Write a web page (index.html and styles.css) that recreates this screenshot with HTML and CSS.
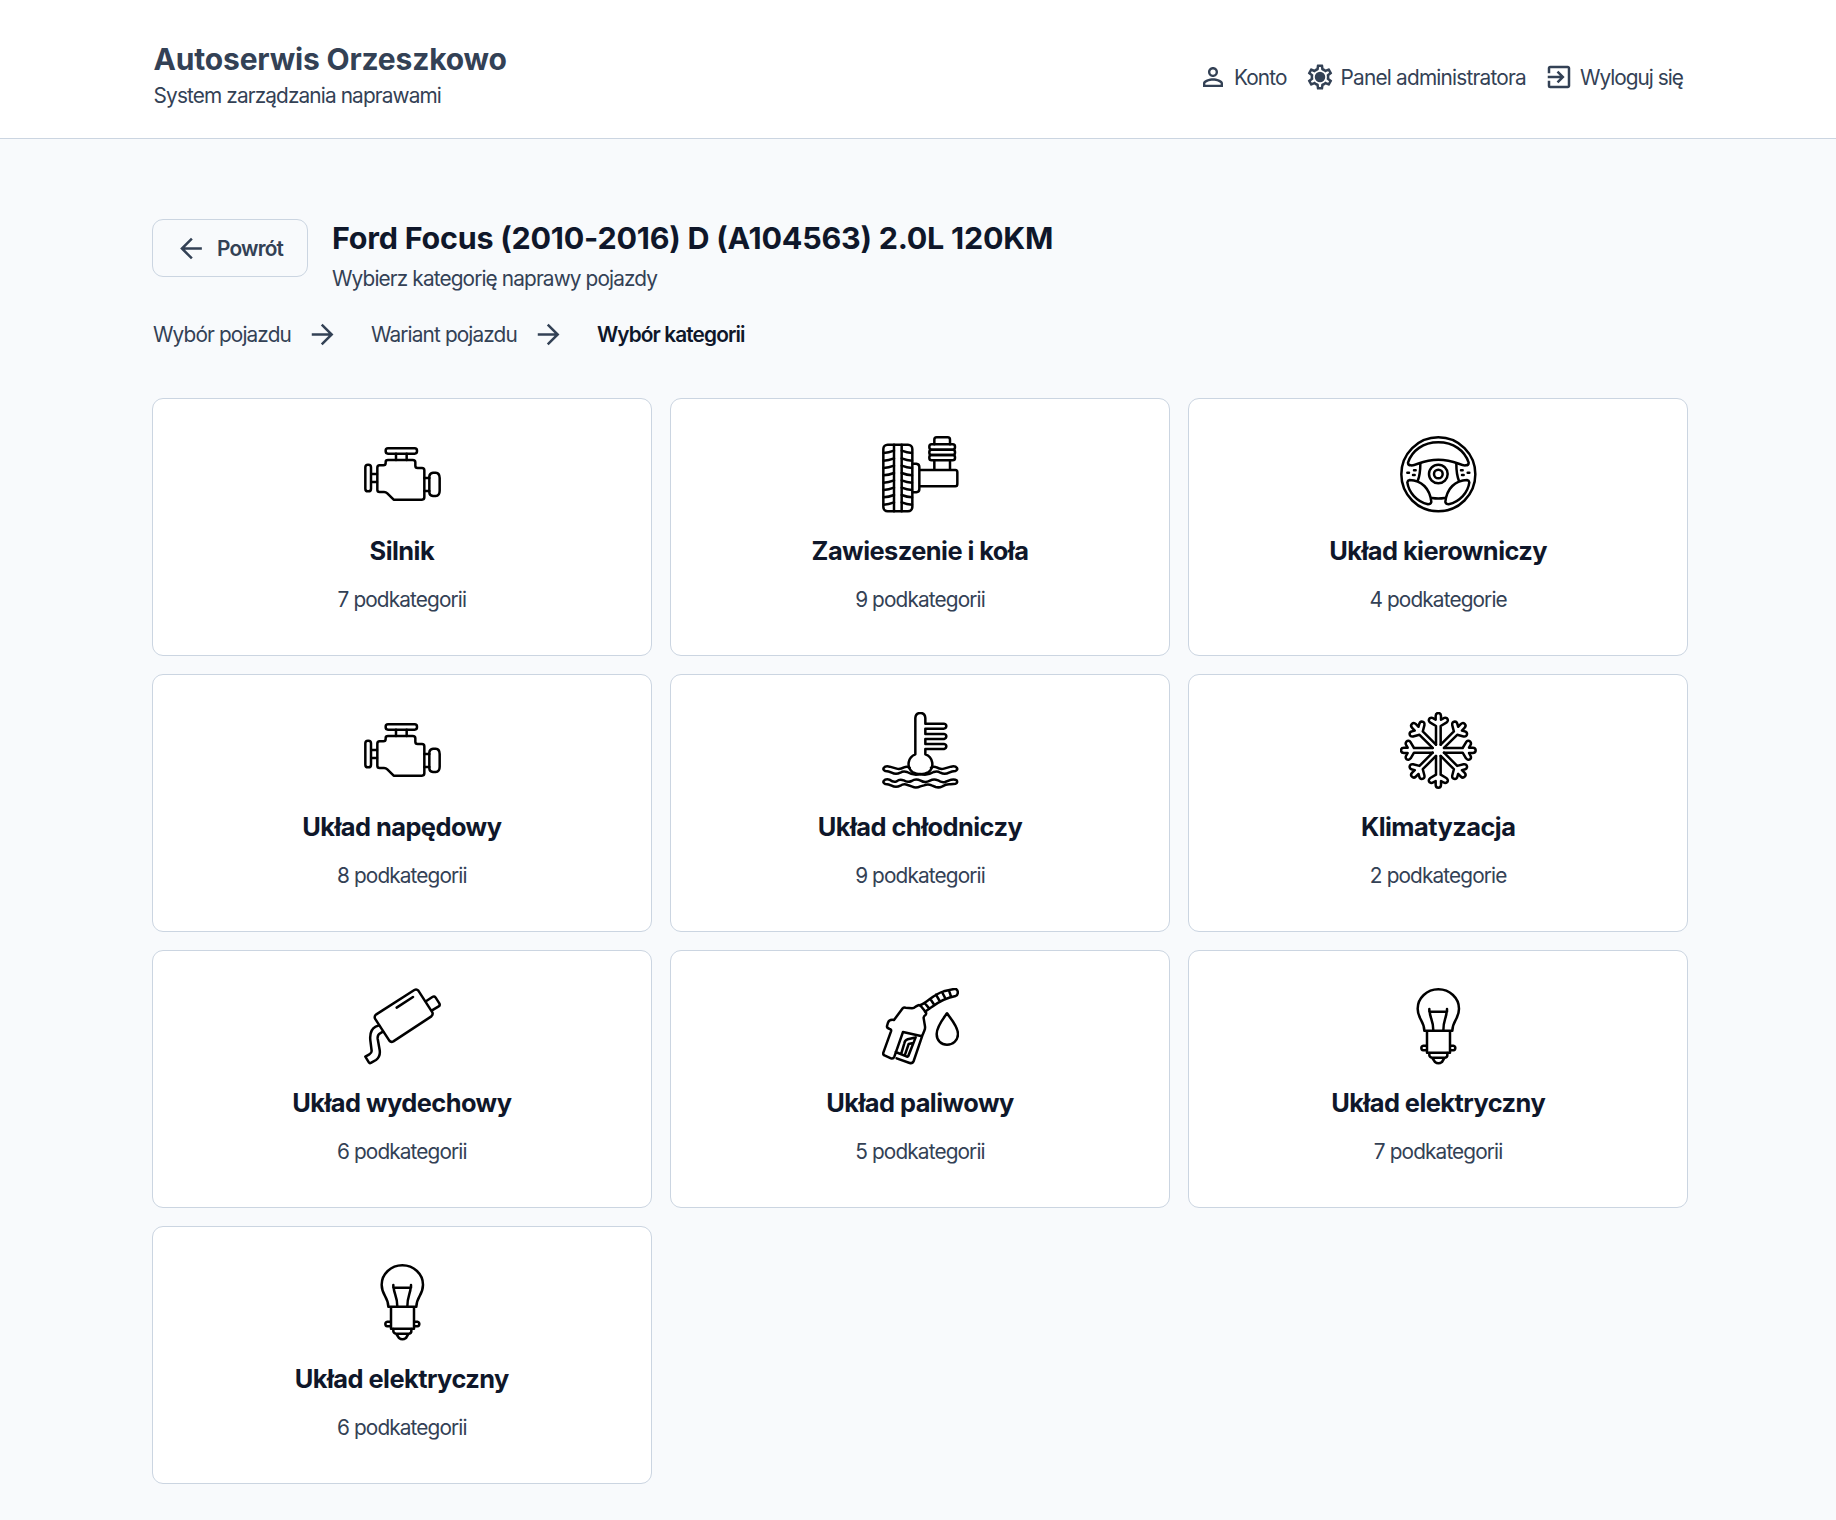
FILE: index.html
```html
<!DOCTYPE html>
<html lang="pl">
<head>
<meta charset="utf-8">
<title>Autoserwis Orzeszkowo</title>
<link rel="stylesheet" href="styles.css">
</head>
<body>
<svg class="sprite" aria-hidden="true">
  <symbol id="engine" viewBox="41 18 231 231">
    <rect x="106" y="55" width="94" height="16" rx="7"/>
    <path d="M137 71V90M169 71V90M63 132H80M63 156H80M222 144H237M222 183H237"/>
    <rect x="45" y="104" width="17" height="80" rx="8"/>
    <path d="M88 106H99Q106 106 106 99V96Q106 90 113 90H187Q195 90 195 97V107Q195 114 202 114H215Q222 114 222 121V202Q222 209 215 209H130L111 190Q107 186 101 186H88Q81 186 81 179V113Q81 106 88 106Z"/>
    <path d="M248 128H256Q268 129 268 144V182Q268 197 256 198H248Q237 197 237 187V139Q238 129 248 128Z"/>
  </symbol>
  <symbol id="wheel" viewBox="36 33 231 231">
    <rect x="40" y="59" width="87" height="200" rx="13"/>
    <path d="M72 59V259M95 59V259"/>
    <path d="M41 84Q56 83 72 77M41 107Q56 106 72 100M41 129Q56 128 72 122M41 151Q56 150 72 144M41 173Q56 172 72 166M41 195Q56 194 72 188M41 217Q56 216 72 210M41 239Q56 238 72 232"/>
    <path d="M126 84Q111 83 95 77M126 107Q111 106 95 100M126 129Q111 128 95 122M126 151Q111 150 95 144M126 173Q111 172 95 166M126 195Q111 194 95 188M126 217Q111 216 95 210M126 239Q111 238 95 232"/>
    <path d="M128 116H139Q148 117 148 126V193Q148 201 139 202H128M148 135H256Q262 135 262 142V177Q262 184 256 184H148M193 106V135M240 106V135"/>
    <path d="M193 58V44Q193 37 200 37H233Q240 37 240 44V58"/>
    <rect x="178" y="58" width="77" height="16" rx="7"/><rect x="178" y="74" width="77" height="16" rx="7"/><rect x="178" y="90" width="77" height="16" rx="7"/>
  </symbol>
  <symbol id="steering" viewBox="30 33 231 231">
    <circle cx="145" cy="148" r="111"/><circle cx="145" cy="147" r="28"/><circle cx="145" cy="147" r="13"/>
    <path d="M63 121Q54 121 54 113C66 76 100 52 145 52S224 76 236 113Q236 121 227 121C214 124 193 104 145 104S76 124 63 121Z"/>
    <path d="M91 117C91 143 89 153 83 168M199 117C199 143 201 153 207 168M126 219Q145 222 164 219"/>
    <path d="M59 165C94 166 120 190 124 231Q122 238 114 238C80 230 56 202 52 172Q53 166 59 165ZM231 165C196 166 170 190 166 231Q168 238 176 238C210 230 234 202 238 172Q237 166 231 165Z"/>
    <path d="M52 143H57M72 136H77M69 150H74M213 136H218M233 143H238M216 150H221"/>
  </symbol>
  <symbol id="coolant" viewBox="36 36 231 231">
    <path d="M127 216A31 31 0 0 1 136 163V54Q137 39 151 39T166 54V71H222Q229 72 229 78T222 86H166V102H222Q229 103 229 109T222 117H166V132H222Q229 133 229 139T222 147H166V163A31 31 0 0 1 176 216Q152 230 127 216Z"/>
    <path d="M119 203Q112 198 102 202Q90 209 80 206L59 200Q46 197 41 204Q38 210 46 213Q56 213 65 218Q78 225 91 218Q100 212 111 216Q131 228 151 222Q172 228 191 216Q202 212 211 218Q224 225 237 218Q246 213 256 213Q264 210 261 204Q256 197 243 200L222 206Q211 209 200 202Q190 198 183 203"/>
    <path d="M59 239Q46 236 41 243Q38 249 46 252Q56 252 65 257Q78 264 91 257Q101 250 113 255L127 260Q138 265 151 259L162 256Q174 251 185 256L197 261Q207 264 217 259Q230 251 242 253L257 251Q264 248 260 241Q254 237 244 239L225 246Q213 248 204 241Q191 236 180 242Q165 250 152 242Q137 235 125 243Q112 249 101 241Q89 236 80 244Q70 248 59 239Z"/>
  </symbol>
  <symbol id="snow" viewBox="30 35 231 231">
    <defs><path id="arm" d="M138 133V77L121 67Q113 61 119 54Q124 50 130 54L137 58V47Q137 38 145 38T153 47V58L160 54Q166 50 171 54Q177 61 169 67L152 77V133"/></defs>
    <use href="#arm"/><use href="#arm" transform="rotate(45 145 150)"/><use href="#arm" transform="rotate(90 145 150)"/><use href="#arm" transform="rotate(135 145 150)"/><use href="#arm" transform="rotate(180 145 150)"/><use href="#arm" transform="rotate(225 145 150)"/><use href="#arm" transform="rotate(270 145 150)"/><use href="#arm" transform="rotate(315 145 150)"/>
  </symbol>
  <symbol id="exhaust" viewBox="41 36 231 231">
    <path d="M78 115L192 42Q199 38 204 44L246 109Q249 116 243 121L129 196Q122 200 117 194L74 128Q71 120 78 115ZM139 95L188 63M228 75L246 63Q252 59 256 65L267 82Q270 88 265 91L245 103"/>
    <path d="M86 148L76 152C61 160 58 174 60 193L64 225Q64 231 57 235L45 242L56 260Q58 263 63 260L77 252C88 244 90 235 88 222L82 188Q81 176 89 172L98 167"/>
  </symbol>
  <symbol id="fuel" viewBox="36 36 231 231">
    <path d="M72 132L97 98Q101 94 107 95L126 97Q132 97 137 92L144 88Q149 86 153 91L167 108Q170 112 167 116Q160 121 161 127L165 151Q166 158 163 164L158 176L131 255Q128 263 119 261L80 247M72 132Q58 129 54 140L51 150Q50 156 59 159Q65 160 63 166L40 230Q38 237 45 239L63 247Q70 249 73 242L99 168L156 181M77 228L109 241Q113 244 116 238L137 184M94 232L103 202Q105 192 113 190L133 185M105 236L116 204L126 202Q130 202 128 207L115 239"/>
    <path d="M152 87C176 76 190 55 221 46L252 39Q261 37 263 46Q265 56 257 60C219 67 199 83 184 94L165 107M164 81L178 98M181 69L193 87M198 56L209 75M216 48L226 67M237 43L243 62"/>
    <path d="M231 112C222 125 200 151 200 174C200 194 214 206 231 206S264 194 264 174C264 151 240 125 231 112Z"/>
  </symbol>
  <symbol id="bulb" viewBox="30 36 231 231">
    <path d="M103 164C103 134 83 130 83 98A62 58 0 0 1 207 98C207 130 187 134 187 164ZM111 165V230H180V165"/>
    <path d="M118 99V107H171V99M119 107C120 127 130 132 130 164M170 107C169 127 160 132 160 164M110 209H100Q94 210 94 216T100 223H110M181 209H190Q196 210 196 216T190 223H181M118 231V238Q119 244 126 245H165Q172 244 172 238V231M127 246L135 258Q145 266 156 258L163 246"/>
  </symbol>
  <symbol id="next" viewBox="0 0 60 60"><path d="M2 30H54M28 4L54 30L28 56"/></symbol>
</svg>

<header class="header">
  <div class="header-inner">
    <div class="brand">
      <div class="brand-name">Autoserwis Orzeszkowo</div>
      <div class="brand-sub">System zarządzania naprawami</div>
    </div>
    <nav class="nav">
      <a class="nav-item"><svg viewBox="0 0 24 24"><path d="M12 5.900a2.100 2.100 0 110 4.200 2.100 2.100 0 010-4.200m0 9c2.970 0 6.100 1.460 6.100 2.100v1.100H5.900V17c0-.64 3.130-2.100 6.100-2.100M12 4C9.790 4 8 5.790 8 8s1.790 4 4 4 4-1.790 4-4-1.790-4-4-4zm0 9c-2.670 0-8 1.340-8 4v3h16v-3c0-2.660-5.330-4-8-4z"/></svg><span>Konto</span></a>
      <a class="nav-item nav-admin"><svg viewBox="0 0 24 24"><path d="M19.43 12.98c.04-.32.07-.64.07-.98s-.03-.66-.07-.98l2.11-1.65c.19-.15.24-.42.12-.64l-2-3.46a.5.5 0 00-.61-.22l-2.49 1c-.52-.4-1.08-.73-1.69-.98l-.38-2.65A.49.49 0 0014 2h-4c-.25 0-.46.18-.49.42l-.38 2.65c-.61.25-1.17.59-1.69.98l-2.49-1a.5.5 0 00-.61.22l-2 3.46c-.13.22-.07.49.12.64l2.11 1.65c-.04.32-.07.65-.07.98s.03.66.07.98l-2.11 1.65c-.19.15-.24.42-.12.64l2 3.46c.12.22.39.3.61.22l2.49-1c.52.4 1.08.73 1.69.98l.38 2.65c.03.24.24.42.49.42h4c.25 0 .46-.18.49-.42l.38-2.65c.61-.25 1.17-.59 1.69-.98l2.49 1c.23.09.49 0 .61-.22l2-3.46a.5.5 0 00-.12-.64l-2.11-1.65zm-1.98-1.71c.04.31.05.52.05.73s-.02.43-.05.73l-.14 1.13.89.7 1.08.84-.7 1.21-1.27-.51-1.04-.42-.9.68c-.43.32-.84.56-1.25.73l-1.06.43-.16 1.13-.2 1.35h-1.4l-.19-1.35-.16-1.13-1.06-.43c-.43-.18-.83-.41-1.23-.71l-.91-.7-1.06.43-1.27.51-.7-1.21 1.08-.84.89-.7-.14-1.13c-.03-.31-.05-.54-.05-.74s.02-.43.05-.73l.14-1.13-.89-.7-1.08-.84.7-1.21 1.27.51 1.04.42.9-.68c.43-.32.84-.56 1.25-.73l1.06-.43.16-1.13.2-1.35h1.39l.19 1.35.16 1.13 1.06.43c.43.18.83.41 1.23.71l.91.7 1.06-.43 1.27-.51.7 1.21-1.07.85-.89.7.14 1.13z"/><circle cx="12" cy="12" r="4.200"/></svg><span>Panel administratora</span></a>
      <a class="nav-item nav-logout"><svg viewBox="0 0 24 24"><path d="M19 3H5a2 2 0 00-2 2v4h2V5h14v14H5v-4H3v4a2 2 0 002 2h14c1.100 0 2-.9 2-2V5c0-1.100-.9-2-2-2zM10.100 15.600L11.500 17l5-5-5-5-1.400 1.400L12.700 11H3v2h9.700z"/></svg><span>Wyloguj się</span></a>
    </nav>
  </div>
</header>

<main class="main">
  <section class="heading">
    <a class="back"><svg viewBox="0 0 60 60"><path d="M57 30H5M31 4L5 30L31 56"/></svg><span>Powrót</span></a>
    <div class="heading-text">
      <h1>Ford Focus (2010-2016) D (A104563) 2.0L 120KM</h1>
      <p>Wybierz kategorię naprawy pojazdy</p>
    </div>
  </section>
  <nav class="crumbs">
    <span>Wybór pojazdu</span><svg><use href="#next"/></svg>
    <span>Wariant pojazdu</span><svg><use href="#next"/></svg>
    <strong>Wybór kategorii</strong>
  </nav>
  <section class="grid">
    <article class="card"><svg><use href="#engine"/></svg><h2>Silnik</h2><p>7 podkategorii</p></article>
    <article class="card"><svg><use href="#wheel"/></svg><h2>Zawieszenie i koła</h2><p>9 podkategorii</p></article>
    <article class="card"><svg><use href="#steering"/></svg><h2>Układ kierowniczy</h2><p>4 podkategorie</p></article>
    <article class="card"><svg><use href="#engine"/></svg><h2>Układ napędowy</h2><p>8 podkategorii</p></article>
    <article class="card"><svg><use href="#coolant"/></svg><h2>Układ chłodniczy</h2><p>9 podkategorii</p></article>
    <article class="card"><svg><use href="#snow"/></svg><h2>Klimatyzacja</h2><p>2 podkategorie</p></article>
    <article class="card"><svg><use href="#exhaust"/></svg><h2>Układ wydechowy</h2><p>6 podkategorii</p></article>
    <article class="card"><svg><use href="#fuel"/></svg><h2>Układ paliwowy</h2><p>5 podkategorii</p></article>
    <article class="card"><svg><use href="#bulb"/></svg><h2>Układ elektryczny</h2><p>7 podkategorii</p></article>
    <article class="card"><svg><use href="#bulb"/></svg><h2>Układ elektryczny</h2><p>6 podkategorii</p></article>
  </section>
</main>
</body>
</html>
```
FILE: styles.css
```css
* { box-sizing: border-box; }
body {
  margin: 0;
  min-height: 1520px;
  background: #f8fafc;
  color: #334155;
  font: 370 20.8px/30px Inter, "Liberation Sans", sans-serif;
  letter-spacing: -0.042em;
  -webkit-font-smoothing: antialiased;
}
h1, h2, p { margin: 0; }
span, h1, h2, p, strong, .brand { white-space: nowrap; }
.sprite { display: block; width: 0; height: 0; }

.header {
  height: 139px;
  background: #fff;
  border-bottom: 1px solid #cbd5e1;
}
.header-inner {
  width: 1530px;
  height: 100%;
  margin: 0 auto;
  padding-top: 41px;
  display: flex;
  justify-content: space-between;
  align-items: flex-start;
}
.brand { padding-left: 0.6px; }
.brand-name { font-size: 30px; line-height: 37px; font-weight: 700; letter-spacing: -0.006em; }
.brand-sub { line-height: 35px; }
.nav { display: flex; gap: 18.5px; padding-top: 21px; }
.nav-item { display: flex; align-items: flex-start; gap: 5.5px; }
.nav-item span { padding-top: 1px; }
.nav-item svg { width: 30px; height: 30px; fill: #334155; }
.nav-admin { letter-spacing: -0.038em; }
.nav-logout { letter-spacing: -0.047em; }

.main { width: 1536px; margin: 0 0 0 152px; padding-top: 80px; }
.heading { display: flex; align-items: flex-start; gap: 24px; height: 78px; }
.back {
  display: flex;
  align-items: center;
  gap: 14px;
  width: 156px;
  height: 58px;
  padding-left: 27px;
  border: 1px solid #cbd5e1;
  border-radius: 11px;
  font-weight: 600;
  letter-spacing: -0.038em;
}
.back span { padding-top: 1px; }
.back svg, .crumbs svg {
  width: 23px;
  height: 23px;
  fill: none;
  stroke: #334155;
  stroke-width: 6.5;
}
.heading h1 { font-size: 30.5px; line-height: 38px; font-weight: 700; letter-spacing: -0.0077em; color: #0f172a; }
.heading p { margin-top: 7px; }
.crumbs { display: flex; align-items: center; height: 30px; margin-top: 23px; padding-left: 1px; }
.crumbs svg { margin: 0 37px 1px 20px; }
.crumbs strong { font-weight: 600; color: #0f172a; }

.grid {
  display: grid;
  grid-template-columns: repeat(3, 1fr);
  grid-auto-rows: 257.5px;
  gap: 18.5px;
  margin-top: 48px;
}
.card {
  display: flex;
  flex-direction: column;
  align-items: center;
  padding-top: 36.6px;
  background: #fff;
  border: 1px solid #cbd5e1;
  border-radius: 11px;
}
.card svg {
  width: 77px;
  height: 77px;
  margin-left: 1px;
  fill: none;
  stroke: #000;
  stroke-width: 7.5;
  stroke-linecap: round;
  stroke-linejoin: round;
}
.card h2 { margin-top: 21px; font-size: 25.4px; line-height: 34px; font-weight: 700; letter-spacing: -0.0215em; color: #0f172a; }
.card p { margin-top: 17.4px; }
```
